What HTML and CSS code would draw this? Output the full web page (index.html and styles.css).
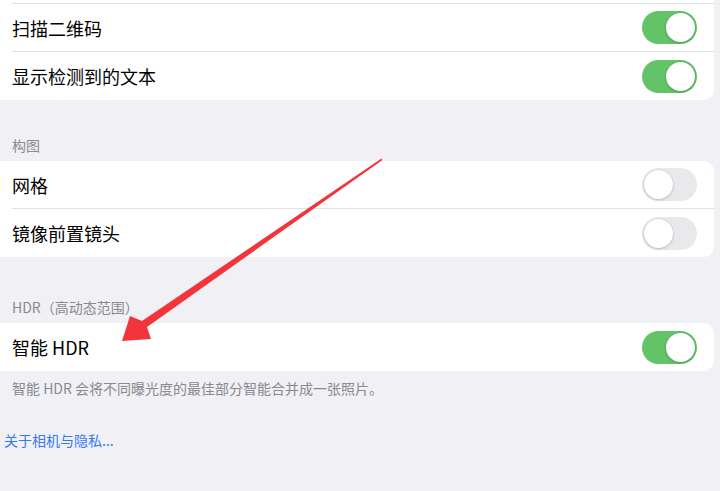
FILE: index.html
```html
<!DOCTYPE html>
<html lang="zh-CN">
<head>
  <meta charset="UTF-8">
  <meta name="viewport" content="width=device-width, initial-scale=1.0">
  <title>相机设置</title>
  <link rel="stylesheet" href="styles.css">
</head>
<body>
  <div class="settings">

    <!-- Detection -->
    <div class="card card-top">
      <div class="row row-ghost"></div>
      <div class="row">
        <span class="label">扫描二维码</span>
        <span class="switch on"><span class="knob"></span></span>
      </div>
      <div class="row">
        <span class="label">显示检测到的文本</span>
        <span class="switch on"><span class="knob"></span></span>
      </div>
    </div>

    <!-- Composition -->
    <div class="section-title first">构图</div>
    <div class="card">
      <div class="row">
        <span class="label">网格</span>
        <span class="switch"><span class="knob"></span></span>
      </div>
      <div class="row">
        <span class="label">镜像前置镜头</span>
        <span class="switch"><span class="knob"></span></span>
      </div>
    </div>

    <!-- HDR -->
    <div class="section-title second">HDR（高动态范围）</div>
    <div class="card">
      <div class="row">
        <span class="label">智能 HDR</span>
        <span class="switch on"><span class="knob"></span></span>
      </div>
    </div>
    <div class="section-note">智能 HDR 会将不同曝光度的最佳部分智能合并成一张照片。</div>

    <a href="#" class="privacy-link">关于相机与隐私...</a>
  </div>

  <!-- Annotation arrow -->
  <svg class="arrow" width="720" height="491" viewBox="0 0 720 491">
    <polygon points="381.5,158.5 142,321 130,316 122,341 151,339 147,327 382.5,160" fill="#f2353b"/>
  </svg>
</body>
</html>
```

FILE: styles.css
```css
body {
  margin: 0;
  padding: 0;
  background-color: #f0f0f5;
  font-family: "Noto Sans CJK SC", "Noto Sans", sans-serif;
  overflow: hidden;
}

.settings {
  width: 720px;
}

.card {
  background-color: white;
  margin: 0 6px 0 -10px;
  padding-left: 22px;
  border-radius: 10px;
}

.card-top {
  margin-top: -44px;
}

.row {
  display: flex;
  align-items: center;
  justify-content: space-between;
  height: 48px;
  padding-right: 17px;
  border-bottom: 1px solid #e2e2e6;
  box-sizing: border-box;
}

.row:last-child {
  border-bottom: none;
}

.label {
  font-size: 18px;
  color: #000;
}

/* iOS style switch */
.switch {
  position: relative;
  width: 55px;
  height: 33px;
  border-radius: 17px;
  background-color: #e9e9eb;
}

.switch.on {
  background-color: #62c466;
}

.switch .knob {
  position: absolute;
  top: 2px;
  left: 2px;
  width: 29px;
  height: 29px;
  border-radius: 50%;
  background-color: white;
  box-shadow: 0 1px 3px rgba(0, 0, 0, 0.18), 0 0 0 0.5px rgba(0, 0, 0, 0.08);
}

.switch.on .knob {
  left: 24px;
}

.section-title {
  padding: 0 12px;
  font-size: 14px;
  line-height: 18px;
  color: #8a8a8e;
  margin-bottom: 7px;
}

.section-title.first {
  margin-top: 36px;
}

.section-title.second {
  margin-top: 41px;
}

.section-note {
  padding: 0 12px;
  margin-top: 8px;
  font-size: 14px;
  line-height: 18px;
  color: #8a8a8e;
}

.privacy-link {
  display: block;
  padding: 0 4px;
  margin-top: 34px;
  font-size: 14px;
  line-height: 18px;
  color: #3478f6;
  text-decoration: none;
}

.arrow {
  position: absolute;
  top: 0;
  left: 0;
  pointer-events: none;
}
```
